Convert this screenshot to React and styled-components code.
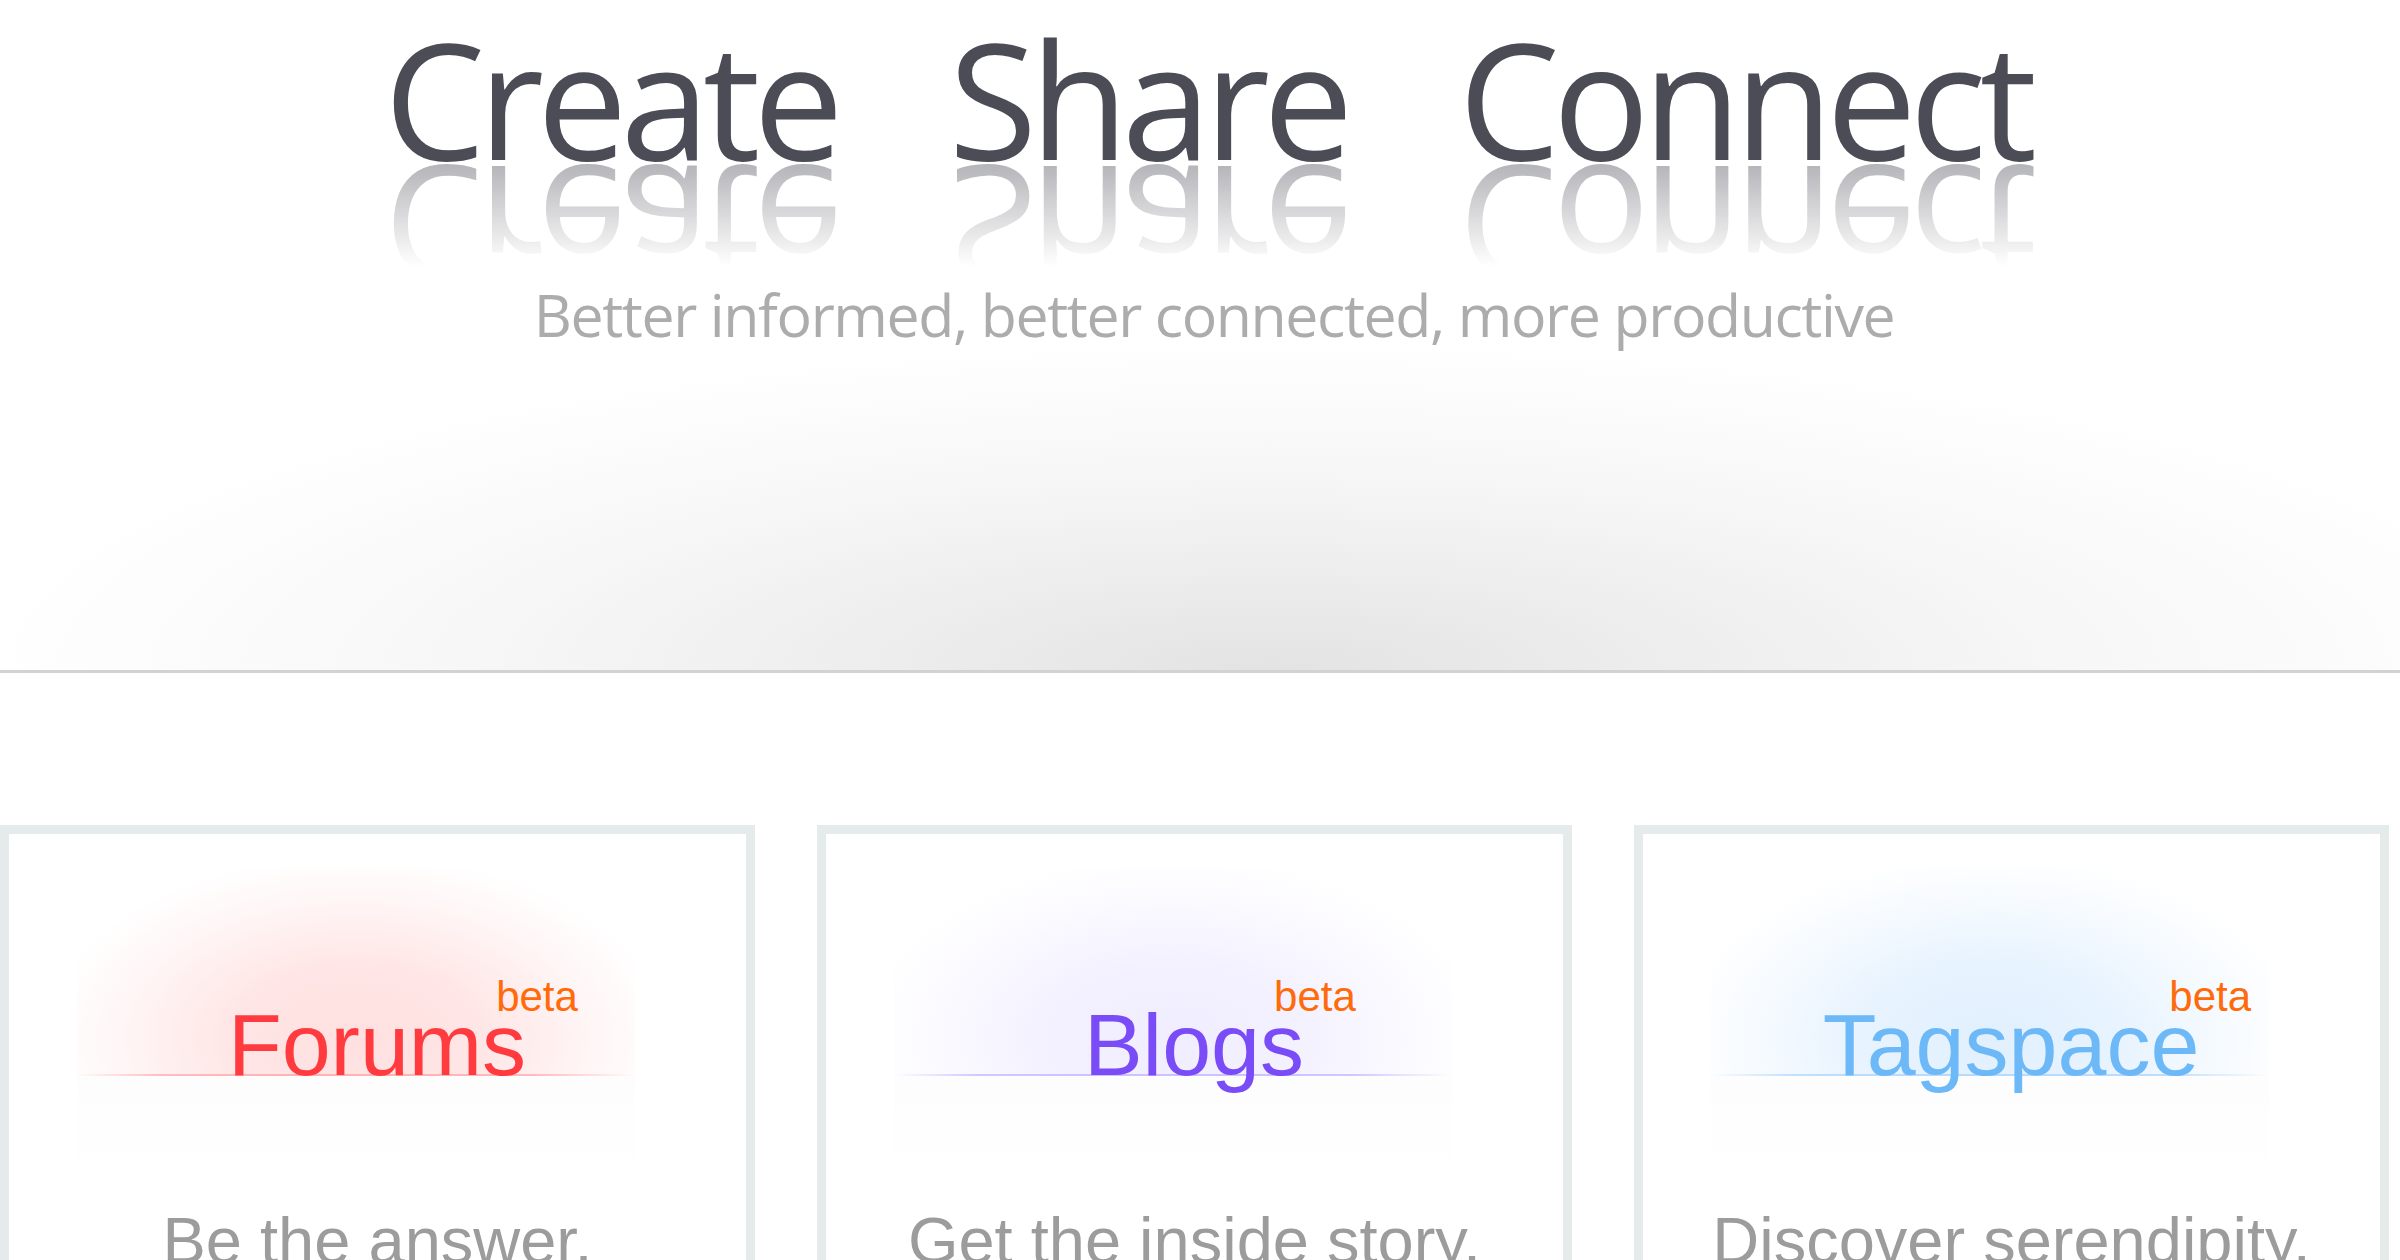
import styled, { createGlobalStyle } from "styled-components";

const GlobalStyle = createGlobalStyle`
    html, body {
        margin: 0;
        padding: 0;
        background: #ffffff;
        overflow: hidden;
    }
`;

const products = [
    { name: "Forums", tagline: "Be the answer.", color: "#ff3b40", glow: "255, 70, 70", alpha: 0.17 },
    { name: "Blogs", tagline: "Get the inside story.", color: "#7a4cf8", glow: "120, 90, 255", alpha: 0.11 },
    { name: "Tagspace", tagline: "Discover serendipity.", color: "#6db9f7", glow: "80, 165, 250", alpha: 0.17 },
];

export default function App() {
    return (
        <>
            <GlobalStyle />
            <Hero>
                <Heading>
                    <Word>Create</Word>
                    <Word>Share</Word>
                    <Word>Connect</Word>
                </Heading>
                <Subtitle>Better informed, better connected, more productive</Subtitle>
            </Hero>
            <Cards>
                {products.map((p) => (
                    <Card key={p.name}>
                        <Logo $glow={p.glow} $alpha={p.alpha}>
                            <Title $color={p.color}>
                                {p.name}
                                <Beta>beta</Beta>
                            </Title>
                        </Logo>
                        <Floor />
                        <Tagline>{p.tagline}</Tagline>
                    </Card>
                ))}
            </Cards>
        </>
    );
}

const Hero = styled.div`
    height: 673px;
    box-sizing: border-box;
    padding: 34px 0 0 14px;
    border-bottom: 3px solid #d2d2d2;
    background:
        radial-gradient(ellipse 1300px 330px at 1270px 100%, #e3e3e3 0%, #ededed 30%, #f7f7f7 62%, rgba(255, 255, 255, 0) 100%),
        #ffffff;
    font-family: 'Open Sans', 'Noto Sans', sans-serif;
`;

const Heading = styled.div`
    display: flex;
    justify-content: center;
    gap: 112px;
    font-size: 161px;
    line-height: 0.8;
    color: #4b4c56;
    letter-spacing: -7px;
    -webkit-box-reflect: below 0px linear-gradient(to bottom, rgba(0, 0, 0, 0) 20%, rgba(0, 0, 0, 0.42) 100%);
`;

const Word = styled.span`
    display: block;
`;

const Subtitle = styled.div`
    margin-top: 122px;
    padding-left: 14px;
    text-align: center;
    font-size: 59px;
    line-height: 1;
    color: #acacac;
    letter-spacing: -1.4px;
`;

const Cards = styled.div`
    display: flex;
    gap: 62px;
    padding-top: 152px;
`;

const Card = styled.div`
    width: 755px;
    height: 620px;
    flex-shrink: 0;
    box-sizing: border-box;
    border: 9px solid #e5ebeb;
    padding-top: 33px;
    font-family: 'Liberation Sans', Arial, sans-serif;
`;

const Logo = styled.div`
    width: 558px;
    height: 209px;
    margin-left: 68px;
    padding-left: 42px;
    box-sizing: border-box;
    display: flex;
    justify-content: center;
    align-items: flex-end;
    background:
        linear-gradient(to right, rgba(${(p) => p.$glow}, 0) 0%, rgba(${(p) => p.$glow}, 0.3) 15%, rgba(${(p) => p.$glow}, 0.3) 82%, rgba(${(p) => p.$glow}, 0) 100%) left bottom / 100% 2px no-repeat,
        radial-gradient(ellipse 56% 88% at 50% 82%, rgba(${(p) => p.$glow}, ${(p) => p.$alpha}) 0%, rgba(${(p) => p.$glow}, ${(p) => p.$alpha * 0.8}) 40%, rgba(${(p) => p.$glow}, ${(p) => p.$alpha * 0.3}) 75%, rgba(${(p) => p.$glow}, 0) 100%);
`;

const Title = styled.div`
    position: relative;
    font-size: 88px;
    line-height: 0.693;
    color: ${(p) => p.$color};
    white-space: nowrap;
`;

const Beta = styled.span`
    position: absolute;
    left: calc(100% - 30px);
    bottom: 58px;
    font-size: 42px;
    line-height: 1;
    color: #ff6a0a;
`;

const Floor = styled.div`
    width: 558px;
    height: 120px;
    margin-left: 68px;
    background: linear-gradient(to bottom, rgba(0, 0, 0, 0.006), rgba(0, 0, 0, 0));
`;

const Tagline = styled.div`
    margin-top: 12px;
    text-align: center;
    font-size: 65px;
    line-height: 1;
    color: #9c9c9c;
`;
